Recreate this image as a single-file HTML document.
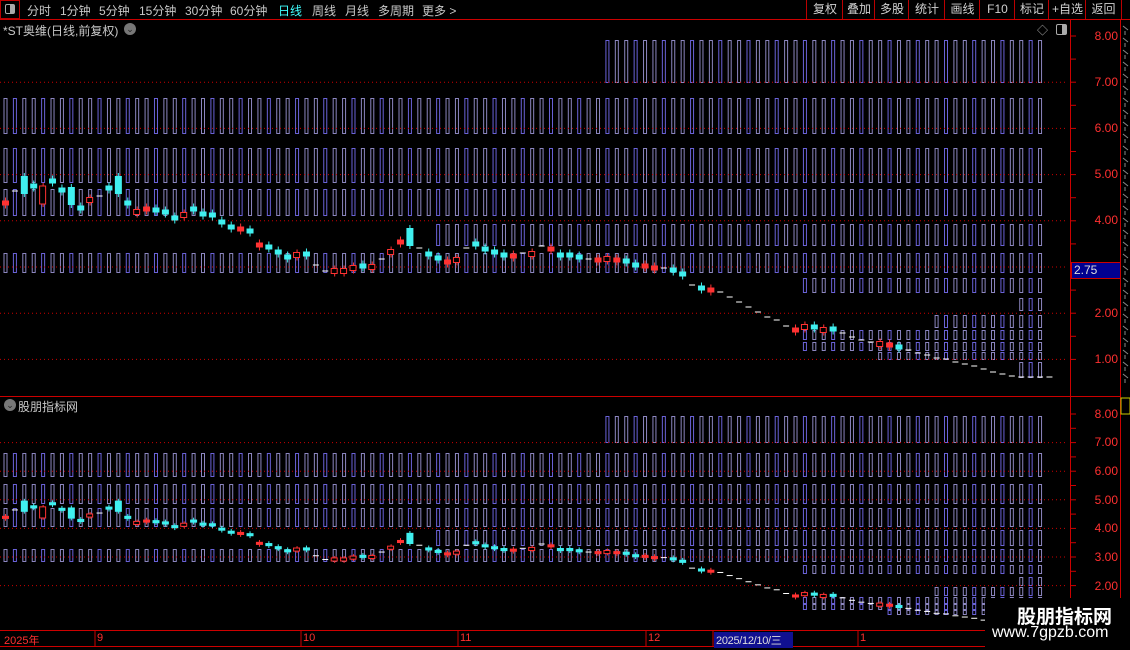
<!DOCTYPE html>
<html><head><meta charset="utf-8">
<style>
body{margin:0;width:1130px;height:650px;background:#000;overflow:hidden;position:relative;font-family:"Liberation Sans","Noto Sans CJK SC",sans-serif;color:#c8c8c8}
.a{position:absolute;white-space:nowrap}
.tb{position:absolute;font-size:12px;top:2px;white-space:nowrap}
.btn{position:absolute;top:0;height:19px;border-left:1px solid #b00;font-size:12px;line-height:19px;text-align:center;color:#d0d0d0;white-space:nowrap}
.pl{position:absolute;color:#ff3030;font-size:12px;right:12px}
.tm{position:absolute;top:632px;color:#ff3030;font-size:11px;white-space:nowrap}
</style></head><body>
<svg id="s" width="1130" height="650" style="position:absolute;left:0;top:0"></svg>
<div class="a" style="left:0;top:0;width:20px;height:19px;border:1px solid #b00;box-sizing:border-box"></div>
<div class="a" style="left:5px;top:4px;width:10px;height:10px;border:1px solid #aaa;border-radius:2px;box-sizing:border-box"><div style="position:absolute;right:0;top:0;width:4px;height:8px;background:#aaa"></div></div>
<div class="tb" style="left:27px">分时</div>
<div class="tb" style="left:60px">1分钟</div>
<div class="tb" style="left:99px">5分钟</div>
<div class="tb" style="left:139px">15分钟</div>
<div class="tb" style="left:185px">30分钟</div>
<div class="tb" style="left:230px">60分钟</div>
<div class="tb" style="left:278px;color:#40ffff">日线</div>
<div class="tb" style="left:312px">周线</div>
<div class="tb" style="left:345px">月线</div>
<div class="tb" style="left:378px">多周期</div>
<div class="tb" style="left:422px">更多 &gt;</div>
<div class="btn" style="left:806px;width:36px">复权</div>
<div class="btn" style="left:842px;width:32px">叠加</div>
<div class="btn" style="left:874px;width:34px">多股</div>
<div class="btn" style="left:908px;width:36px">统计</div>
<div class="btn" style="left:944px;width:35px">画线</div>
<div class="btn" style="left:979px;width:35px">F10</div>
<div class="btn" style="left:1014px;width:34px">标记</div>
<div class="btn" style="left:1048px;width:37px">+自选</div>
<div class="btn" style="left:1085px;width:35px;border-right:1px solid #b00">返回</div>
<div class="a" style="left:3px;top:22px;font-size:12px">*ST奥维(日线,前复权)</div>
<div class="a" style="left:124px;top:23px;width:12px;height:12px;border-radius:6px;background:#777;color:#222;font-size:9px;line-height:12px;text-align:center">⌄</div>
<div class="a" style="left:4px;top:399px;width:12px;height:12px;border-radius:6px;background:#777;color:#222;font-size:9px;line-height:12px;text-align:center">⌄</div>
<div class="a" style="left:18px;top:398px;font-size:12px">股朋指标网</div>
<div class="a" style="left:1037px;top:22px;font-size:11px;color:#aaa">◇</div>
<div class="a" style="left:1056px;top:24px;width:11px;height:11px;border:1px solid #aaa;border-radius:2px;box-sizing:border-box"><div style="position:absolute;right:0;top:0;width:4px;height:9px;background:#aaa"></div></div>
<div class="pl" style="top:29px">8.00</div><div class="pl" style="top:75px">7.00</div><div class="pl" style="top:121px">6.00</div><div class="pl" style="top:167px">5.00</div><div class="pl" style="top:213px">4.00</div><div class="pl" style="top:306px">2.00</div><div class="pl" style="top:352px">1.00</div>
<div class="a" style="left:1071px;top:262px;background:#000090;border:1px solid #c00;color:#ddd;font-size:12px;line-height:15px;padding-left:2px;box-sizing:border-box;width:50px;height:17px">2.75</div>
<div class="pl" style="top:407px">8.00</div><div class="pl" style="top:435px">7.00</div><div class="pl" style="top:464px">6.00</div><div class="pl" style="top:493px">5.00</div><div class="pl" style="top:521px">4.00</div><div class="pl" style="top:550px">3.00</div><div class="pl" style="top:579px">2.00</div>
<div class="tm" style="left:4px">2025年</div><div class="tm" style="left:97px">9</div><div class="tm" style="left:303px">10</div><div class="tm" style="left:460px">11</div><div class="tm" style="left:648px">12</div>
<div class="tm" style="left:714px;background:#101090;color:#ddd;padding:0 2px;width:75px;overflow:hidden;letter-spacing:-0.3px">2025/12/10/三</div><div class="tm" style="left:860px">1</div>
<div class="a" style="left:985px;top:598px;width:145px;height:52px;background:#000"></div>
<div class="a" style="left:1017px;top:602px;font-size:19px;font-weight:bold;color:#fff">股朋指标网</div>
<div class="a" style="left:992px;top:624px;font-size:16px;color:#fff">www.7gpzb.com</div>
<script>
var S=document.getElementById('s'),h='';
function r(x,y,w,hh,f,st){h+='<rect x="'+x+'" y="'+y+'" width="'+w+'" height="'+hh+'" fill="'+(f||'none')+'"'+(st?' stroke="'+st+'" stroke-width="1"':'')+'/>';}
function l(x1,y1,x2,y2,c,d){h+='<line x1="'+x1+'" y1="'+y1+'" x2="'+x2+'" y2="'+y2+'" stroke="'+c+'"'+(d?' stroke-dasharray="1,3"':'')+'/>';}
var P=9.405,X0=3.5;
function grp(y1,y2,xs){for(var i=0;i<111;i++){var x=X0+i*P;if(x+1<xs)continue;r(x+.5,y1+.5,3,y2-y1,null,i%3==1?'#6a62d8':'#8c86c0');}}
[[40,82,598],[98,133,0],[148,182,0],[189,215,0],[224,245,430],[253,272,0],[278,292,795],[298,310,1015],[315,327,932],[330,339,795],[342,350,795],[352,359,878],[362,377,1015]].forEach(function(g){grp(g[0],g[1],g[2]);});
[[416,442,598],[453,476,0],[484,503,0],[508,526,0],[530,545,430],[549,561,0],[565,573,795],[577,585,1015],[587,595,932],[597,603,795],[604,609,795],[610,614,880]].forEach(function(g){grp(g[0],g[1],g[2]);});
for(var p=1;p<=7;p++){var y=36+(8-p)*46.2;l(0,y,1068,y,'#c00',1);}
for(var p=2;p<=7;p++){var y=414+(8-p)*28.6;l(0,y,1068,y,'#c00',1);}
var D="203r191w185C186c195H181c190c196C208c200R196w188c185C203c212R209r210c212c218c215R209c214c215c222c227c229r231c245r247c252c257c255R254c265w271w271R271R268R266c267R259w252R242r237C248w254c258c262r260R248w244c249c252c255c256r253w254R246w249r255c255c257c259w260r259R260r261c265c266r268r268w270c274c285w288c290r292w297w302w307w312w317w320w326w330r327R327c330R329c333w337w340w342w344R345r347c350w353w355w358w359w362w364w366w369w372w374w376w377w377w377w377w".match(/\d+[a-zA-Z]/g);
function cand(base,sc){for(var i=0;i<D.length;i++){var x=X0+i*P,yy=parseInt(D[i]),t=D[i].slice(-1);var y=base+(yy-36)*sc;var hh=(t=='C'||t=='H')?18*sc:5*sc;var cx=x+2;
if(t=='w'){l(x-1,y,x+5,y,'#fff');continue;}
var col=(t=='r'||t=='R'||t=='H')?'#ff3232':'#40f0f0';
l(cx,y-hh/2-3*sc,cx,y+hh/2+3*sc,col);
if(t=='R'||t=='H')r(x-1.5,y-hh/2,6,hh,'#000',col);else r(x-1.5,y-hh/2,7,hh,col);}}
cand(36,1);cand(414,0.619);
l(0,19.5,1130,19.5,'#c00');l(0,396.5,1120,396.5,'#c00');l(0,630.5,1120,630.5,'#c00');l(0,646.5,1120,646.5,'#c00');
l(1070.5,20,1070.5,630,'#c00');l(1120.5,20,1120.5,650,'#c00');
for(var p=1;p<=8;p+=.5){var y=36+(8-p)*46.2;l(1070,y,1076,y,'#c00');}
for(var p=2;p<=8;p+=.5){var y=414+(8-p)*28.6;l(1070,y,1076,y,'#c00');}
[97,303,460,648,715,860].forEach(function(x){l(x-2,631,x-2,646,'#c00');});
for(var i=0;i<30;i++){var y=26+i*12;if(y<390){l(1123,y,1128,y+4,'#888');l(1125,y+5,1125,y+9,'#888');}}
h+='<rect x="1121" y="398" width="9" height="16" fill="none" stroke="#cc0"/>';
S.innerHTML=h;
</script>
</body></html>
